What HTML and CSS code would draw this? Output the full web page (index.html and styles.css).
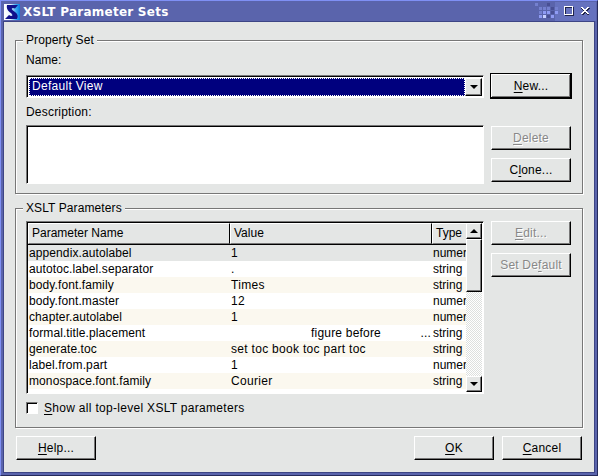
FILE: index.html
```html
<!DOCTYPE html>
<html lang="en">
<head>
<meta charset="utf-8">
<title>XSLT Parameter Sets</title>
<link rel="stylesheet" href="styles.css">
</head>
<body>
<div class="window">
  <header class="titlebar">
    <svg class="app-icon" width="16" height="16" viewBox="0 0 16 16">
      <defs><linearGradient id="g" x1="0" x2="1"><stop offset="0" stop-color="#fff"/><stop offset=".4" stop-color="#e8f4ff"/><stop offset=".75" stop-color="#38a8f0"/><stop offset="1" stop-color="#0878e0"/></linearGradient></defs>
      <path fill="url(#g)" d="M0 0h16v16H0z"/>
      <path fill="#10108c" d="M3 1h11L11 4.500Q8 3.500 7.700 5Q8 6 11 8Q15 11 13 15H1L5 11Q8 13 8.500 11Q8 9.500 5.500 8Q2 5 3 1z"/>
    </svg>
    <h1>XSLT Parameter Sets</h1>
    <svg class="controls" width="61" height="19" viewBox="534 3 61 19" shape-rendering="crispEdges">
      <path fill="#6672be" d="M554 3h41v19h-41z"/>
      <path fill="#7480cf" d="M534 4h3v3h-3zM538 8h3v3h-3zM542 8h3v3h-3zM538 12h3v3h-3zM546 8h3v3h-3zM554 8h3v3h-3z"/>
      <path fill="#8f9bf4" d="M542 12h3v3h-3zM546 12h3v3h-3zM554 12h3v3h-3zM538 16h3v3h-3zM550 16h3v3h-3z"/>
      <path fill="#484f94" d="M546 4h3v3h-3zM550 12h3v3h-3zM546 16h3v3h-3zM550 8h3v3h-3z"/>
      <path fill="#c8d0ff" d="M542 16h3v3h-3z"/>
      <path fill="none" stroke="#20244a" d="M564.5 8.500h8v8h-8z"/>
      <path fill="none" stroke="#fff" d="M563.5 7.500h8v8h-8z"/>
      <path fill="none" stroke="#20244a" stroke-width="2" d="M581 9l7 7M588 9l-7 7"/>
      <path fill="none" stroke="#fff" stroke-width="2" d="M580.5 8l7 7M587.5 8l-7 7"/>
    </svg>
  </header>
  <main class="client">
    <section class="group property">
      <h2>Property Set</h2>
      <div class="fields">
        <label class="name-label">Name:</label>
        <div class="combo sunken"><div class="selected">Default View</div><div class="drop raised"><svg width="8" height="4" viewBox="0 0 8 4"><path d="M0 0h8L4 4z"/></svg></div></div>
        <label class="desc-label">Description:</label>
        <div class="description sunken"></div>
      </div>
      <div class="actions">
        <button class="default"><span><u>N</u>ew...</span></button>
        <button class="delete" disabled><span><u>D</u>elete</span></button>
        <button><span>C<u>l</u>one...</span></button>
      </div>
    </section>
    <section class="group parameters">
      <h2>XSLT Parameters</h2>
      <div class="fields">
        <div class="table sunken">
          <div class="grid">
            <div class="row head"><span>Parameter Name</span><span>Value</span><span>Type</span></div>
            <div class="row current"><span>appendix.autolabel</span><span>1</span><span>numer</span></div>
            <div class="row"><span>autotoc.label.separator</span><span>.</span><span>string</span></div>
            <div class="row alt"><span>body.font.family</span><span>Times</span><span>string</span></div>
            <div class="row"><span>body.font.master</span><span>12</span><span>numer</span></div>
            <div class="row alt"><span>chapter.autolabel</span><span>1</span><span>numer</span></div>
            <div class="row"><span>formal.title.placement</span><span class="long"><i>figure before</i><i>...</i></span><span>string</span></div>
            <div class="row alt"><span>generate.toc</span><span>set toc book toc part toc</span><span>string</span></div>
            <div class="row"><span>label.from.part</span><span>1</span><span>numer</span></div>
            <div class="row alt"><span>monospace.font.family</span><span>Courier</span><span>string</span></div>
          </div>
          <div class="scrollbar">
            <div class="arrow raised"><svg width="8" height="4" viewBox="0 0 8 4"><path d="M0 4h8L4 0z"/></svg></div>
            <div class="thumb raised"></div>
            <div class="track"></div>
            <div class="arrow raised"><svg width="8" height="4" viewBox="0 0 8 4"><path d="M0 0h8L4 4z"/></svg></div>
          </div>
        </div>
        <label class="check"><span class="box sunken"></span><span><u>S</u>how all top-level XSLT parameters</span></label>
      </div>
      <div class="actions">
        <button disabled><span><u>E</u>dit...</span></button>
        <button disabled><span>Set De<u>f</u>ault</span></button>
      </div>
    </section>
    <footer><button><span><u>H</u>elp...</span></button><button class="ok"><span><u>O</u>K</span></button><button><span><u>C</u>ancel</span></button></footer>
  </main>
</div>
</body>
</html>
```
FILE: styles.css
```css
* { box-sizing: border-box; }
body { margin: 0; font: 12px/16px "Liberation Sans", Arial, sans-serif; letter-spacing: .3px; color: #000; }
.window { width: 598px; height: 476px; display: flex; flex-direction: column; background: #5a64ac; border: solid; border-width: 1px; border-color: #7f90f5 #262b5c #262b5c #7f90f5; padding: 0 2px 2px; }
.titlebar { height: 20px; display: flex; align-items: flex-start; }
.app-icon { margin: 3px 0 0 1px; }
h1 { margin: 3px 0 0 3px; font: bold 12px/17px "DejaVu Sans", sans-serif; letter-spacing: .25px; color: #fff; flex: 1; white-space: nowrap; }
.controls { margin: 1px -1px 0 0; }
.client { flex: 1; display: flex; flex-direction: column; background: #e4e6e5; border: 1px solid #3d4585; padding: 18px 11px 0; }
.group { position: relative; display: flex; gap: 6px; border: 1px solid #777; box-shadow: 1px 1px 0 #fff, inset 1px 1px 0 #fff; }
.group h2 { position: absolute; left: 7px; top: -9px; margin: 0; padding: 0 3px; font: inherit; letter-spacing: .1px; background: #e4e6e5; white-space: nowrap; }
.property { height: 154px; padding: 11px 10px 0; }
.parameters { height: 220px; margin-top: 14px; padding: 12px 10px 0; }
.fields { width: 458px; display: flex; flex-direction: column; }
.name-label { height: 23px; letter-spacing: 0; }
.desc-label { height: 27px; padding-top: 6px; letter-spacing: .2px; }
.sunken { border: 1px solid; border-color: #777 #fff #fff #777; background: #fff; box-shadow: inset 1px 1px 0 #000; }
.raised { background: #e4e6e5; border: 1px solid; border-color: #fff #000 #000 #fff; box-shadow: inset -1px -1px 0 #777; }
.combo { height: 23px; padding: 2px 1px 1px 2px; display: flex; }
.selected { flex: 1; background: #00007e; color: #fff; border: 1px dotted #fff; padding-left: 2px; line-height: 15px; }
.drop { width: 17px; display: flex; align-items: center; justify-content: center; }
.description { height: 59px; margin-top: 0; }
.actions { display: flex; flex-direction: column; align-items: center; width: 82px; gap: 8px; }
button { width: 80px; height: 24px; flex: none; padding: 0; font: inherit; letter-spacing: .2px; color: #000; background: #e4e6e5; border: 1px solid; border-color: #fff #000 #000 #fff; box-shadow: inset -1px -1px 0 #777; border-radius: 0; }
.default { width: 82px; height: 26px; margin-top: 21px; border-color: #000; box-shadow: inset -1px -1px 0 #000, inset 1px 1px 0 #fff, inset -2px -2px 0 #777; }
.delete { margin-top: 19px; }
button:disabled { color: #888; text-shadow: 1px 1px 0 #fff; }
u { text-underline-offset: 2px; text-decoration-thickness: 1px; }
.table { height: 173px; padding: 1px; display: flex; }
.grid { flex: 1; min-width: 0; overflow: hidden; }
.row { display: grid; grid-template-columns: 202px 202px 34px; height: 16px; background: #fff; white-space: nowrap; }
.row span { padding-left: 1px; }
.row span:first-child { letter-spacing: .1px; }
.row span:last-child { letter-spacing: 0; }
.row.alt { background: #fbf8ef; }
.row.current { background: #e4e6e5; }
.row.head { height: 22px; background: #e4e6e5; line-height: 19px; border-bottom: 1px solid #000; }
.row.head span { padding-left: 3px; letter-spacing: 0; border-left: 1px solid #fff; border-top: 1px solid #fff; border-right: 1px solid #000; border-bottom: 1px solid #777; }
.row.head span:last-child { border-right: 0; }
.long { display: flex; justify-content: space-between; letter-spacing: .2px; }
.row .long { padding: 0 1px 0 81px; }
i { font-style: normal; }
.scrollbar { width: 16px; display: flex; flex-direction: column; }
.arrow { height: 16px; display: flex; align-items: center; justify-content: center; }
.thumb { height: 53px; }
.track { flex: 1; background: repeating-conic-gradient(#fff 0 25%, #dde0de 0 50%) 0 0 / 2px 2px; }
.check { display: flex; gap: 6px; margin-top: 6px; }
.box { width: 12px; height: 12px; margin-top: 2px; }
footer { display: flex; gap: 8px; margin: 8px 1px 0 1px; }
.ok { margin-left: auto; }
```
